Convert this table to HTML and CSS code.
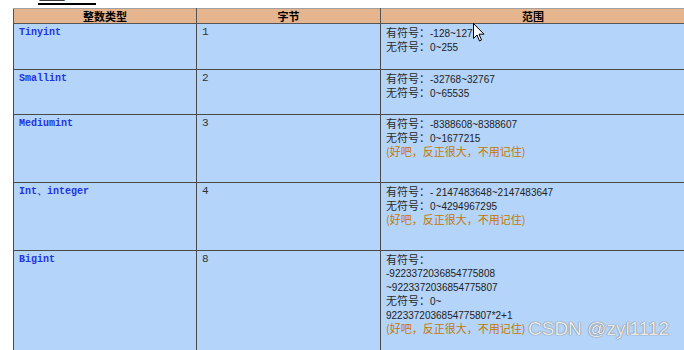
FILE: index.html
```html
<!DOCTYPE html>
<html lang="zh">
<head>
<meta charset="utf-8">
<link rel="stylesheet" href="styles.css">
</head>
<body>
<div class="title"><span class="title-text">整型</span></div>
<table class="types">
  <colgroup><col class="c1"><col class="c2"><col class="c3"></colgroup>
  <thead>
    <tr><th>整数类型</th><th>字节</th><th>范围</th></tr>
  </thead>
  <tbody>
    <tr class="r-short">
      <td class="name">Tinyint</td><td class="bytes">1</td>
      <td class="range">有符号：<span class="num">-128~127</span><br>无符号：<span class="num">0~255</span></td>
    </tr>
    <tr class="r-short2">
      <td class="name">Smallint</td><td class="bytes">2</td>
      <td class="range">有符号：<span class="num">-32768~32767</span><br>无符号：<span class="num">0~65535</span></td>
    </tr>
    <tr class="r-mid">
      <td class="name">Mediumint</td><td class="bytes">3</td>
      <td class="range">有符号：<span class="num">-8388608~8388607</span><br>无符号：<span class="num">0~1677215</span><br><span class="note">(好吧，反正很大，不用记住)</span></td>
    </tr>
    <tr class="r-mid">
      <td class="name">Int、integer</td><td class="bytes">4</td>
      <td class="range">有符号：<span class="num">- 2147483648~2147483647</span><br>无符号：<span class="num">0~4294967295</span><br><span class="note">(好吧，反正很大，不用记住)</span></td>
    </tr>
    <tr class="r-long">
      <td class="name">Bigint</td><td class="bytes">8</td>
      <td class="range">有符号：<br><span class="num">-9223372036854775808</span><br><span class="num">~9223372036854775807</span><br>无符号：<span class="num">0~</span><br><span class="num">9223372036854775807*2+1</span><br><span class="note">(好吧，反正很大，不用记住)</span></td>
    </tr>
  </tbody>
</table>
<svg class="cursor" width="12" height="19" viewBox="0 0 12 19"><path d="M0.5 0.5 L0.5 15.5 L4 12 L6.5 18 L8.5 17 L6 11.2 L11 11.2 Z" fill="#fff" stroke="#000" stroke-width="1"/></svg>
<div class="watermark">CSDN @zyl1112</div>
</body>
</html>
```
FILE: styles.css
```css
html, body {
  margin: 0;
  padding: 0;
  background: #fff;
  overflow: hidden;
  width: 684px;
  height: 350px;
  position: relative;
}
.title {
  height: 8px;
  overflow: hidden;
  display: flex;
  align-items: flex-end;
  padding-left: 38px;
}
.title-text {
  font-family: "Noto Sans CJK SC", sans-serif;
  font-size: 28px;
  line-height: 28px;
  color: #000;
  text-decoration: underline;
  text-decoration-thickness: 2px;
  text-underline-offset: 4px;
  margin-bottom: 7px;
  letter-spacing: 1px;
}
.types {
  margin-left: 13px;
  width: 672px;
  table-layout: fixed;
  border-collapse: collapse;
  background: #b4d4f9;
}
.c1 { width: 183px; }
.c2 { width: 184px; }
.c3 { width: 305px; }
.types th {
  background: #e5b590;
  height: 14px;
  padding: 0;
  font-family: "Noto Sans CJK SC", sans-serif;
  font-size: 11px;
  line-height: 14px;
  font-weight: bold;
  color: #000;
  border: 1px solid #555;
  border-top-color: #a0a0a0;
  text-align: center;
}
.types td {
  border: 1px solid #4a4a4a;
  vertical-align: top;
  padding: 2px 5px 0 5px;
}
.r-short td { height: 43px; }
.r-short2 td { height: 42px; }
.r-mid td { height: 65px; }
.r-long td { height: 111px; }
.name {
  font-family: "Liberation Mono", monospace;
  font-weight: bold;
  font-size: 10px;
  line-height: 13px;
  color: #1f33e0;
}
.bytes {
  font-family: "Liberation Mono", monospace;
  font-size: 11px;
  line-height: 13px;
  color: #333;
}
.range {
  font-family: "Noto Sans CJK SC", sans-serif;
  font-size: 11px;
  line-height: 13px;
  color: #2a2a2a;
}
.num {
  font-family: "Liberation Sans", sans-serif;
  font-size: 10px;
  color: #222;
}
.note {
  color: #c47800;
}
.cursor {
  position: absolute;
  left: 473px;
  top: 23px;
}
.watermark {
  position: absolute;
  left: 528px;
  top: 318px;
  font-family: "Liberation Sans", sans-serif;
  font-size: 19px;
  color: rgba(255, 255, 255, 0.85);
  text-shadow: 0 0 1px #777, 0 0 1px #777;
}
```
